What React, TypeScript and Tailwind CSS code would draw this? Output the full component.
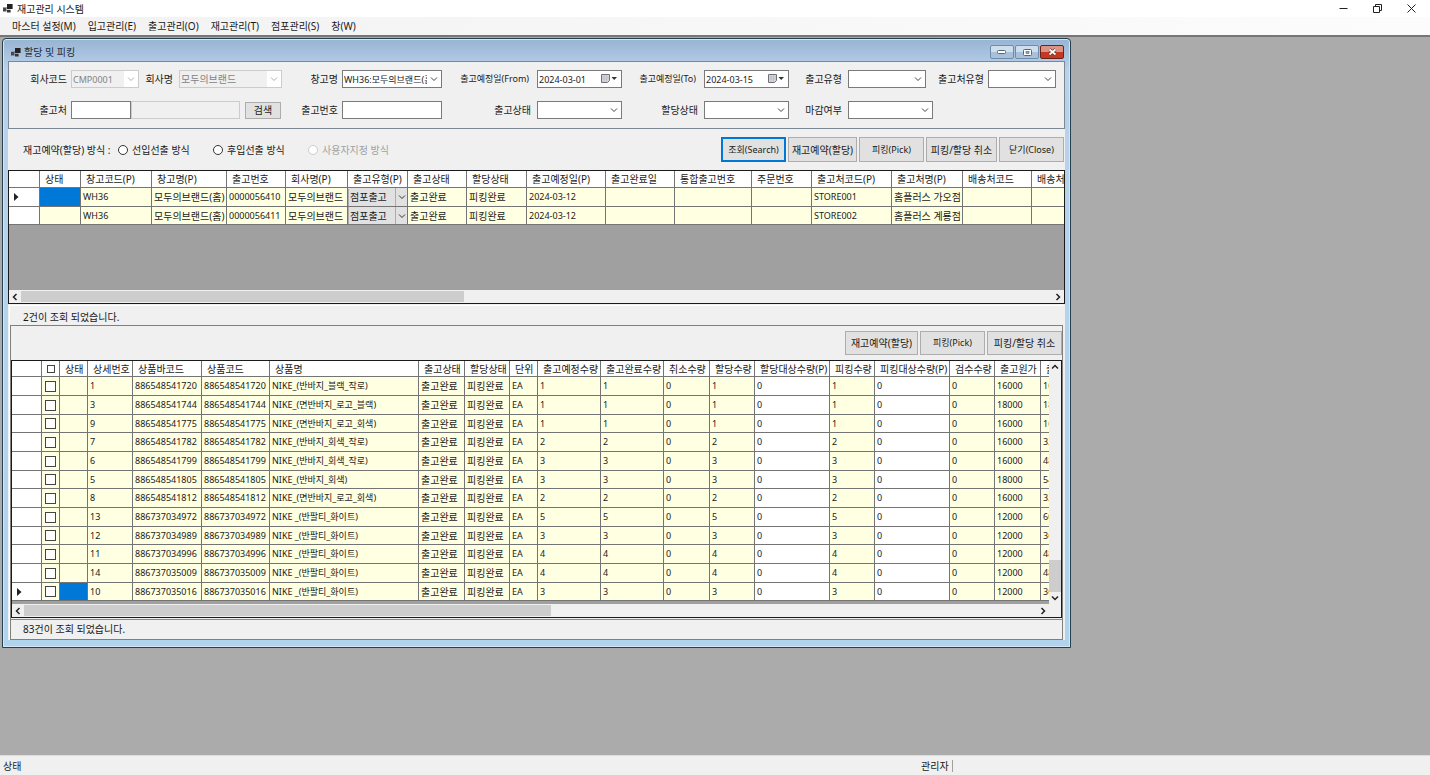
import React from 'react';

interface Column {
  title: string;
  width: number;
  cell?: string;
}

const CODE = 'text-[9px]';

const ORDER_COLUMNS: Column[] = [
  { title: '상태', width: 41 },
  { title: '창고코드(P)', width: 71, cell: CODE },
  { title: '창고명(P)', width: 75 },
  { title: '출고번호', width: 59, cell: CODE },
  { title: '회사명(P)', width: 62 },
  { title: '출고유형(P)', width: 60 },
  { title: '출고상태', width: 59 },
  { title: '할당상태', width: 60 },
  { title: '출고예정일(P)', width: 79, cell: CODE },
  { title: '출고완료일', width: 69, cell: CODE },
  { title: '통합출고번호', width: 77, cell: CODE },
  { title: '주문번호', width: 60, cell: CODE },
  { title: '출고처코드(P)', width: 80, cell: CODE },
  { title: '출고처명(P)', width: 71 },
  { title: '배송처코드', width: 69, cell: CODE },
  { title: '배송처명', width: 60 },
];

const ORDERS: string[][] = [
  ['', 'WH36', '모두의브랜드(홈)', '0000056410', '모두의브랜드', '점포출고', '출고완료', '피킹완료', '2024-03-12', '', '', '', 'STORE001', '홈플러스 가오점', '', ''],
  ['', 'WH36', '모두의브랜드(홈)', '0000056411', '모두의브랜드', '점포출고', '출고완료', '피킹완료', '2024-03-12', '', '', '', 'STORE002', '홈플러스 계룡점', '', ''],
];

const ITEM_COLUMNS: Column[] = [
  { title: '상태', width: 28 },
  { title: '상세번호', width: 45, cell: CODE },
  { title: '상품바코드', width: 69, cell: CODE },
  { title: '상품코드', width: 68, cell: CODE },
  { title: '상품명', width: 149, cell: CODE },
  { title: '출고상태', width: 46 },
  { title: '할당상태', width: 45 },
  { title: '단위', width: 28, cell: CODE },
  { title: '출고예정수량', width: 63, cell: CODE },
  { title: '출고완료수량', width: 63, cell: CODE },
  { title: '취소수량', width: 46, cell: CODE },
  { title: '할당수량', width: 45, cell: CODE },
  { title: '할당대상수량(P)', width: 75, cell: 'text-[9px] bg-white' },
  { title: '피킹수량', width: 45, cell: CODE },
  { title: '피킹대상수량(P)', width: 75, cell: 'text-[9px] bg-white' },
  { title: '검수수량', width: 45, cell: CODE },
  { title: '출고원가', width: 46, cell: CODE },
  { title: '출고금액', width: 60, cell: CODE },
];

interface Item {
  no: number;
  code: string;
  name: string;
  qty: number;
  cost: number;
}

const ITEMS: Item[] = [
  { no: 1, code: '886548541720', name: 'NIKE_(반바지_블랙_작로)', qty: 1, cost: 16000 },
  { no: 3, code: '886548541744', name: 'NIKE_(면반바지_로고_블랙)', qty: 1, cost: 18000 },
  { no: 9, code: '886548541775', name: 'NIKE_(면반바지_로고_회색)', qty: 1, cost: 16000 },
  { no: 7, code: '886548541782', name: 'NIKE_(반바지_회색_작로)', qty: 2, cost: 16000 },
  { no: 6, code: '886548541799', name: 'NIKE_(반바지_회색_작로)', qty: 3, cost: 16000 },
  { no: 5, code: '886548541805', name: 'NIKE_(반바지_회색)', qty: 3, cost: 18000 },
  { no: 8, code: '886548541812', name: 'NIKE_(면반바지_로고_회색)', qty: 2, cost: 16000 },
  { no: 13, code: '886737034972', name: 'NIKE _(반팔티_화이트)', qty: 5, cost: 12000 },
  { no: 12, code: '886737034989', name: 'NIKE _(반팔티_화이트)', qty: 3, cost: 12000 },
  { no: 11, code: '886737034996', name: 'NIKE _(반팔티_화이트)', qty: 4, cost: 12000 },
  { no: 14, code: '886737035009', name: 'NIKE _(반팔티_화이트)', qty: 4, cost: 12000 },
  { no: 10, code: '886737035016', name: 'NIKE _(반팔티_화이트)', qty: 3, cost: 12000 },
];

const itemCells = (item: Item): string[] => {
  const qty = String(item.qty);
  return [
    '', String(item.no), item.code, item.code, item.name, '출고완료', '피킹완료', 'EA',
    qty, qty, '0', qty, '0', qty, '0', '0', String(item.cost), String(item.cost * item.qty),
  ];
};

const MENUS = ['마스터 설정(M)', '입고관리(E)', '출고관리(O)', '재고관리(T)', '점포관리(S)', '창(W)'];

const TH = 'border-r border-b border-[#747474] bg-white p-0 pl-[5px] text-left font-normal whitespace-nowrap overflow-hidden';
const TD = 'border-r border-b border-[#747474] p-0 whitespace-nowrap overflow-hidden';

const FormIcon = () => (
  <svg width="10" height="9" viewBox="0 0 10 9" className="shrink-0">
    <path d="M0 3h3.5v4.5H0z" fill="#4a4a4a" />
    <path d="M4 0h5.6v5H4z" fill="#222" />
    <path d="M4 5.8h3.6v2.7H4z" fill="#333" />
    <path d="M0 3h3.5v1H0z" fill="#999" />
  </svg>
);

interface ChevronProps {
  dir?: 'down' | 'up' | 'left' | 'right';
  weight?: number;
  className?: string;
}

const Chevron: React.FC<ChevronProps> = ({ dir = 'down', weight = 1, className = '' }) => {
  const paths = {
    down: 'M1 2.5 4 5.5 7 2.5',
    up: 'M1 5.5 4 2.5 7 5.5',
    left: 'M5.5 1 2.5 4 5.5 7',
    right: 'M2.5 1 5.5 4 2.5 7',
  };
  return (
    <svg width="8" height="8" viewBox="0 0 8 8" fill="none" stroke="currentColor" strokeWidth={weight} className={className}>
      <path d={paths[dir]} />
    </svg>
  );
};

interface ComboProps {
  id: string;
  value?: string;
  className: string;
  disabled?: boolean;
}

const Combo: React.FC<ComboProps> = ({ id, value = '', className, disabled }) => (
  <div className={`relative h-[18px] ${className}`}>
    <select
      id={id}
      disabled={disabled}
      className="block h-full w-full appearance-none border border-[#7a7a7a] bg-white pr-3.5 pl-px leading-none text-[#1a1a1a] opacity-100 disabled:border-[#cccccc] disabled:bg-[#f0f0f0] disabled:text-[#838383]"
    >
      <option>{value}</option>
    </select>
    <span
      className={`pointer-events-none absolute inset-y-px right-px flex w-3.5 items-center justify-center bg-white ${disabled ? 'text-[#b0b0b0]' : 'text-[#444]'}`}
    >
      <Chevron />
    </span>
  </div>
);

const DateBox = ({ id, value }: { id: string; value: string }) => (
  <div className="flex h-[18px] items-center border border-[#7a7a7a] bg-white text-[9px]">
    <input id={id} defaultValue={value} className="h-full w-0 flex-1 pl-px text-[#1a1a1a] outline-none" />
    <button type="button" aria-label="달력" className="flex h-full w-5 items-center">
      <svg width="18" height="10" viewBox="0 0 18 10">
        <path d="M.5.5h8v6l-2 2h-6z" fill="#d4d7dc" stroke="#6f7378" />
        <path d="M1 3h7M1 5h7M3 1v7M5.500 1v7" stroke="#b5b9c0" strokeWidth=".6" />
        <path d="M10.500 3h5.500L13.200 6z" fill="#333" />
      </svg>
    </button>
  </div>
);

const Label = ({ htmlFor, children, className = '' }: { htmlFor: string; children: React.ReactNode; className?: string }) => (
  <label htmlFor={htmlFor} className={`text-right whitespace-nowrap ${className}`}>
    {children}
  </label>
);

const Button = ({ children, className, primary }: { children: React.ReactNode; className: string; primary?: boolean }) => (
  <button
    type="button"
    className={`bg-[#e1e1e1] whitespace-nowrap ${primary ? 'border-2 border-[#0078d7]' : 'border border-[#adadad]'} ${className}`}
  >
    {children}
  </button>
);

const RowMarker = () => (
  <svg width="5" height="8" viewBox="0 0 5 8" className="ml-[5px]">
    <path d="M0 0v8l4.5-4z" fill="#222" />
  </svg>
);

const HScroll = ({ thumb }: { thumb: string }) => (
  <div className="flex h-[13px] items-center bg-[#f0f0f0] text-[#222]">
    <span className="flex w-3 justify-center">
      <Chevron dir="left" weight={1.5} />
    </span>
    <div className="h-full flex-1 py-px">
      <div className={`h-full bg-[#cdcdcd] ${thumb}`} />
    </div>
    <span className="flex w-3 justify-center">
      <Chevron dir="right" weight={1.5} />
    </span>
  </div>
);

const FilterPanel = () => (
  <div className="grid grid-cols-[62px_211px_60px_100px_95px_85px_82px_85px_59px_1fr] items-center gap-y-[13px] border border-[#7b8794] pt-2 pb-[9px]">
    <Label htmlFor="company" className="pr-1">회사코드</Label>
    <div className="flex items-center">
      <Combo id="company" value="CMP0001" disabled className="w-[68px] text-[9px]" />
      <Label htmlFor="companyName" className="flex-1 pr-1.5">회사명</Label>
      <Combo id="companyName" value="모두의브랜드" disabled className="w-[103px]" />
    </div>
    <Label htmlFor="warehouse" className="pr-1">창고명</Label>
    <Combo id="warehouse" value="WH36:모두의브랜드(홈)" className="w-full text-[9px]" />
    <Label htmlFor="from" className="pr-2 text-[9px]">출고예정일(From)</Label>
    <DateBox id="from" value="2024-03-01" />
    <Label htmlFor="to" className="pr-2 text-[9px]">출고예정일(To)</Label>
    <DateBox id="to" value="2024-03-15" />
    <Label htmlFor="outType" className="pr-1.5">출고유형</Label>
    <div className="flex items-center">
      <Combo id="outType" className="w-[78px]" />
      <Label htmlFor="storeType" className="w-[62px] pr-1">출고처유형</Label>
      <Combo id="storeType" className="w-[68px]" />
    </div>

    <Label htmlFor="store" className="pr-1">출고처</Label>
    <div className="flex h-[18px] items-center">
      <input id="store" className="h-full w-[60px] border border-[#7a7a7a] bg-white px-0.5" />
      <input aria-label="출고처명" disabled className="h-full w-[109px] border border-[#cccccc] bg-[#f0f0f0] px-0.5" />
      <Button className="ml-[5px] h-[17px] w-9">검색</Button>
    </div>
    <Label htmlFor="outNo" className="pr-1">출고번호</Label>
    <input id="outNo" className="h-[18px] w-full border border-[#7a7a7a] bg-white px-0.5" />
    <Label htmlFor="outState" className="pr-1.5">출고상태</Label>
    <Combo id="outState" className="w-full" />
    <Label htmlFor="allocState" className="pr-1.5">할당상태</Label>
    <Combo id="allocState" className="w-full" />
    <Label htmlFor="closed" className="pr-1.5">마감여부</Label>
    <Combo id="closed" className="w-[85px]" />
  </div>
);

const MethodRadio = ({ label, disabled }: { label: string; disabled?: boolean }) => (
  <label className={`flex w-[95px] items-center gap-1 whitespace-nowrap ${disabled ? 'text-[#a0a0a0]' : ''}`}>
    <input
      type="radio"
      name="method"
      disabled={disabled}
      className="size-2.5 appearance-none rounded-full border border-[#333] bg-white disabled:border-[#cccccc]"
    />
    {label}
  </label>
);

const OrderGrid = () => (
  <div className="border border-[#1a1a1a] bg-[#a0a0a0]">
    <div className="h-[119px] overflow-hidden">
      <table className="w-px table-fixed border-separate border-spacing-0">
        <colgroup>
          <col style={{ width: 31 }} />
          {ORDER_COLUMNS.map(c => (
            <col key={c.title} style={{ width: c.width }} />
          ))}
        </colgroup>
        <thead>
          <tr className="h-[17px]">
            <th className={TH} />
            {ORDER_COLUMNS.map(c => (
              <th key={c.title} className={TH}>{c.title}</th>
            ))}
          </tr>
        </thead>
        <tbody>
          {ORDERS.map((row, r) => (
            <tr key={row[3]} className={`bg-[#ffffe1] ${r % 2 ? 'h-[18px]' : 'h-[19px]'}`}>
              <td className={`${TD} bg-white`}>{r === 0 && <RowMarker />}</td>
              {row.map((text, c) =>
                c === 5 ? (
                  <td key={c} className={`${TD} relative bg-[#e1e1e1]`}>
                    <select
                      aria-label="출고유형"
                      className="block h-[17px] w-full appearance-none border-l border-[#adadad] bg-[#e1e1e1] pl-px leading-none"
                    >
                      <option>{text}</option>
                    </select>
                    <span className="pointer-events-none absolute inset-y-0 right-0 flex w-3 items-center justify-center border-l border-[#adadad] text-[#333]">
                      <Chevron />
                    </span>
                  </td>
                ) : (
                  <td key={c} className={`${TD} pl-0.5 ${ORDER_COLUMNS[c].cell ?? ''} ${r === 0 && c === 0 ? 'bg-[#0078d7]' : ''}`}>
                    {text}
                  </td>
                ),
              )}
            </tr>
          ))}
        </tbody>
      </table>
    </div>
    <HScroll thumb="w-[43%]" />
  </div>
);

const ItemGrid = () => (
  <div className="border border-[#1a1a1a] bg-[#a0a0a0]">
    <div className="flex">
      <div className="h-[243px] w-0 flex-1 overflow-hidden">
        <table className="w-px table-fixed border-separate border-spacing-0">
          <colgroup>
            <col style={{ width: 30 }} />
            <col style={{ width: 18 }} />
            {ITEM_COLUMNS.map(c => (
              <col key={c.title} style={{ width: c.width }} />
            ))}
          </colgroup>
          <thead>
            <tr className="h-4">
              <th className={TH} />
              <th className={TH}>
                <input type="checkbox" aria-label="전체 선택" className="block size-2 appearance-none border border-[#444]" />
              </th>
              {ITEM_COLUMNS.map(c => (
                <th key={c.title} className={TH}>{c.title}</th>
              ))}
            </tr>
          </thead>
          <tbody>
            {ITEMS.map((item, r) => (
              <tr key={item.no} className={`bg-[#ffffe1] ${r % 3 === 2 ? 'h-[18px]' : 'h-[19px]'}`}>
                <td className={`${TD} bg-white`}>{r === ITEMS.length - 1 && <RowMarker />}</td>
                <td className={TD}>
                  <input
                    type="checkbox"
                    aria-label={`${item.no} 선택`}
                    className="ml-[3px] block size-[11px] appearance-none border border-[#444] bg-white"
                  />
                </td>
                {itemCells(item).map((text, c) => (
                  <td
                    key={c}
                    className={`${TD} pl-0.5 ${ITEM_COLUMNS[c].cell ?? ''} ${c === 0 && r === ITEMS.length - 1 ? 'bg-[#0078d7]' : ''}`}
                  >
                    {text}
                  </td>
                ))}
              </tr>
            ))}
          </tbody>
        </table>
      </div>
      {/* Vertical scroll bar */}
      <div className="flex w-3 flex-col items-center bg-[#f0f0f0] py-0.5 text-[#222]">
        <Chevron dir="up" weight={1.5} />
        <div className="flex w-full flex-1 flex-col justify-end">
          <div className="h-8 bg-[#cdcdcd]" />
        </div>
        <Chevron dir="down" weight={1.5} className="mt-0.5" />
      </div>
    </div>
    <div className="bg-[#f0f0f0] pr-3">
      <HScroll thumb="w-[52%]" />
    </div>
  </div>
);

const CAPTION_BUTTON = 'flex h-3.5 w-6 items-center justify-center rounded-[2px] border';

const ChildWindow = () => (
  <section className="w-[calc(75%-2px)] rounded-t-sm border border-[#24404f] bg-linear-to-b from-[#98b4d3] via-[#b9d1ea] via-5% to-[#b0d3ee] px-[5px] pb-[7px] shadow-[inset_0_0_0_1px_#d5e6f5]">
    <header className="flex h-[22px] items-center justify-between pr-px pl-[3px]">
      <h2 className="flex items-center gap-[3px] pt-1 text-[#1c2b3c]">
        <FormIcon />
        할당 및 피킹
      </h2>
      <div className="flex gap-px pt-1">
        <button type="button" aria-label="최소화" className={`${CAPTION_BUTTON} border-[#6f8cab] bg-linear-to-b from-[#cfdeed] from-50% to-[#a8c0da] to-50%`}>
          <svg width="10" height="5" viewBox="0 0 10 5"><rect x=".5" y=".5" width="8" height="3" rx="1" fill="#fff" stroke="#536577" /></svg>
        </button>
        <button type="button" aria-label="최대화" className={`${CAPTION_BUTTON} border-[#6f8cab] bg-linear-to-b from-[#cfdeed] from-50% to-[#a8c0da] to-50%`}>
          <svg width="9" height="7" viewBox="0 0 9 7"><rect x=".5" y=".5" width="8" height="6" rx="1" fill="#fff" stroke="#536577" /><rect x="3" y="2.5" width="3" height="2" fill="#8fa6bf" stroke="#536577" strokeWidth=".6" /></svg>
        </button>
        <button type="button" aria-label="닫기" className={`${CAPTION_BUTTON} border-[#6b2218] bg-linear-to-b from-[#dd9285] from-50% to-[#c23a22] to-50%`}>
          <svg width="9" height="8" viewBox="0 0 9 8"><path d="m1.500 1.500 6 5m0-5-6 5" stroke="#5a2a26" strokeWidth="3" /><path d="m1.500 1.500 6 5m0-5-6 5" stroke="#fff" strokeWidth="1.800" /></svg>
        </button>
      </div>
    </header>

    <div className="bg-[#f0f0f0]">
      <FilterPanel />

      <div className="flex h-[41px] items-center justify-between pr-px pl-[15px]">
        <div className="flex items-center">
          <span className="w-[95px]">재고예약(할당) 방식 :</span>
          <MethodRadio label="선입선출 방식" />
          <MethodRadio label="후입선출 방식" />
          <MethodRadio label="사용자지정 방식" disabled />
        </div>
        <div className="flex gap-0.5">
          <Button primary className="h-[25px] w-[65px] text-[9px]">조회(Search)</Button>
          <Button className="h-[25px] w-[69px]">재고예약(할당)</Button>
          <Button className="h-[25px] w-[65px] text-[9px]">피킹(Pick)</Button>
          <Button className="h-[25px] w-[71px]">피킹/할당 취소</Button>
          <Button className="h-[25px] w-[65px] text-[9px]">닫기(Close)</Button>
        </div>
      </div>

      <OrderGrid />

      <div className="mt-px mr-0.5 ml-px border-t border-l border-white">
        <p className="flex h-[19px] items-center pt-0.5 pl-[13px]">2건이 조회 되었습니다.</p>
        <div className="border border-[#7f7f7f]">
          <div className="flex h-[34px] items-center justify-end gap-0.5">
            <Button className="h-6 w-[73px]">재고예약(할당)</Button>
            <Button className="h-6 w-[65px] text-[9px]">피킹(Pick)</Button>
            <Button className="h-6 w-[75px]">피킹/할당 취소</Button>
          </div>
          <ItemGrid />
          <p className="mt-px flex h-5 items-center border-t border-[#8a8a8a] pb-0.5 pl-3">83건이 조회 되었습니다.</p>
        </div>
      </div>
    </div>
  </section>
);

export default function App() {
  return (
    <div className="flex min-h-screen flex-col bg-[#ababab] font-['Noto_Sans','Noto_Sans_CJK_KR',sans-serif] text-[10px] leading-3 text-[#1a1a1a]">
      <header className="flex h-[17px] items-center bg-white pl-[3px]">
        <FormIcon />
        <h1 className="ml-1 flex-1">재고관리 시스템</h1>
        <div className="flex gap-[14px] pr-[9px] text-[#222]">
          <button type="button" aria-label="최소화" className="flex w-5 justify-center">
            <svg width="9" height="9" viewBox="0 0 9 9" stroke="currentColor"><path d="M.5 4.5h8" /></svg>
          </button>
          <button type="button" aria-label="이전 크기로" className="flex w-5 justify-center">
            <svg width="9" height="9" viewBox="0 0 9 9" stroke="currentColor" fill="none"><path d="M.5 2.5h6v6h-6zM2.500 2.500v-2h6v6h-2" /></svg>
          </button>
          <button type="button" aria-label="닫기" className="flex w-5 justify-center">
            <svg width="9" height="9" viewBox="0 0 9 9" stroke="currentColor"><path d="m.5.5 8 8m0-8-8 8" /></svg>
          </button>
        </div>
      </header>

      <nav className="flex h-[18px] items-center gap-3 bg-linear-to-r from-[#f2f2f2] to-[#fcfcfc] pl-3">
        {MENUS.map(menu => (
          <button key={menu} type="button">{menu}</button>
        ))}
      </nav>

      <main className="flex-1 border-t-2 border-[#767676] pt-px pb-8 pl-0.5">
        <ChildWindow />
      </main>

      <footer className="flex h-5 items-center border-t border-[#dcdcdc] bg-[#f0f0f0] pl-[3px]">
        <span className="w-[918px]">상태</span>
        <span className="border-r border-[#a0a0a0] pr-[3px]">관리자</span>
      </footer>
    </div>
  );
}
